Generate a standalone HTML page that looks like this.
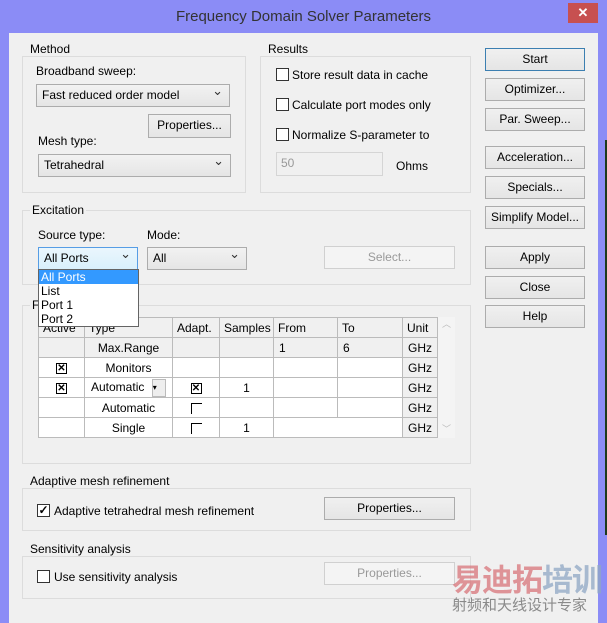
<!DOCTYPE html>
<html><head><meta charset="utf-8"><style>
*{box-sizing:border-box;margin:0;padding:0}
body{width:607px;height:614px;overflow:hidden;background:#8b8cf6;font-family:"Liberation Sans",sans-serif;font-size:12px;color:#000;position:relative}
.a{position:absolute}
#client{left:9px;top:33px;width:589px;height:590px;background:#f0f0f0}
.title{left:0;top:0;width:607px;height:33px;text-align:center;line-height:34px;font-size:15px;color:#333}
.close{left:568px;top:3px;width:30px;height:20px;background:#c75050;color:#fff;text-align:center;line-height:20px;font-size:13px;font-weight:bold}
.grp{border:1px solid #dcdcdc}
.lbl{background:#f0f0f0;padding:0 2px;line-height:14px}
.btn{border:1px solid #acacac;background:linear-gradient(#f0f0f0,#e5e5e5);text-align:center;line-height:20px}
.dis{color:#999;border-color:#d0d0d0;background:#f4f4f4}
.sel{border:1px solid #acacac;background:linear-gradient(#f2f2f2,#e5e5e5);line-height:20px;padding-left:5px}
.sel:after{content:"⌄";position:absolute;right:6px;top:-4px;font-size:13px;color:#333}
.cb{width:13px;height:13px;border:1px solid #333;background:#fff}
table{border-collapse:collapse;position:absolute;left:38px;top:317px;background:#fff}
td{border:1px solid #bbb;height:20px;text-align:center;padding:0;font-size:12px}
tr.h td{background:#f0f0f0;text-align:left;padding-left:4px}
.xb{display:inline-block;width:11px;height:11px;border:1px solid #000;font-size:10px;line-height:9px;font-weight:bold;vertical-align:middle}
.eb{display:inline-block;width:11px;height:11px;border-left:1px solid #000;border-top:1px solid #000;vertical-align:middle}
</style></head><body>
<div class="a title">Frequency Domain Solver Parameters</div>
<div class="a close">✕</div>
<div class="a" id="client"></div>
<div class="a" style="left:605px;top:140px;width:2px;height:395px;background:#1d3a1d"></div>

<!-- Method -->
<div class="a grp" style="left:22px;top:56px;width:224px;height:137px"></div>
<div class="a lbl" style="left:28px;top:42px">Method</div>
<div class="a" style="left:36px;top:64px">Broadband sweep:</div>
<div class="a sel" style="left:36px;top:84px;width:194px;height:23px">Fast reduced order model</div>
<div class="a btn" style="left:148px;top:114px;width:83px;height:24px">Properties...</div>
<div class="a" style="left:38px;top:134px">Mesh type:</div>
<div class="a sel" style="left:38px;top:154px;width:193px;height:23px">Tetrahedral</div>

<!-- Results -->
<div class="a grp" style="left:260px;top:56px;width:211px;height:137px"></div>
<div class="a lbl" style="left:266px;top:42px">Results</div>
<div class="a cb" style="left:276px;top:68px"></div><div class="a" style="left:292px;top:68px">Store result data in cache</div>
<div class="a cb" style="left:276px;top:98px"></div><div class="a" style="left:292px;top:98px">Calculate port modes only</div>
<div class="a cb" style="left:276px;top:128px"></div><div class="a" style="left:292px;top:128px">Normalize S-parameter to</div>
<div class="a" style="left:276px;top:152px;width:107px;height:24px;border:1px solid #d5d5d5;background:#f0f0f0;color:#999;padding:3px 4px">50</div>
<div class="a" style="left:396px;top:159px">Ohms</div>

<!-- Right buttons -->
<div class="a btn" style="left:485px;top:48px;width:100px;height:23px;border-color:#3c7fb1">Start</div>
<div class="a btn" style="left:485px;top:78px;width:100px;height:23px">Optimizer...</div>
<div class="a btn" style="left:485px;top:108px;width:100px;height:23px">Par. Sweep...</div>
<div class="a btn" style="left:485px;top:146px;width:100px;height:23px">Acceleration...</div>
<div class="a btn" style="left:485px;top:176px;width:100px;height:23px">Specials...</div>
<div class="a btn" style="left:485px;top:206px;width:100px;height:23px">Simplify Model...</div>
<div class="a btn" style="left:485px;top:246px;width:100px;height:23px">Apply</div>
<div class="a btn" style="left:485px;top:276px;width:100px;height:23px">Close</div>
<div class="a btn" style="left:485px;top:305px;width:100px;height:23px">Help</div>

<!-- Excitation -->
<div class="a grp" style="left:22px;top:210px;width:449px;height:75px"></div>
<div class="a lbl" style="left:30px;top:203px">Excitation</div>
<div class="a" style="left:38px;top:228px">Source type:</div>
<div class="a" style="left:147px;top:228px">Mode:</div>
<div class="a sel" style="left:147px;top:247px;width:100px;height:23px">All</div>
<div class="a btn dis" style="left:324px;top:246px;width:131px;height:23px">Select...</div>

<!-- Frequency -->
<div class="a grp" style="left:22px;top:305px;width:449px;height:159px"></div>
<div class="a lbl" style="left:30px;top:298px">F</div>
<table>
<tr class="h"><td style="width:46px">Active</td><td style="width:88px">Type</td><td style="width:47px">Adapt.</td><td style="width:54px">Samples</td><td style="width:64px">From</td><td style="width:65px">To</td><td style="width:35px">Unit</td></tr>
<tr><td style="background:#f0f0f0"></td><td style="background:#f0f0f0">Max.Range</td><td style="background:#f0f0f0"></td><td style="background:#f0f0f0"></td><td style="background:#f0f0f0;text-align:left;padding-left:5px">1</td><td style="background:#f0f0f0;text-align:left;padding-left:5px">6</td><td style="background:#f0f0f0">GHz</td></tr>
<tr><td><span class="xb">✕</span></td><td>Monitors</td><td></td><td></td><td></td><td></td><td style="background:#f0f0f0">GHz</td></tr>
<tr><td><span class="xb">✕</span></td><td style="text-align:left;padding-left:6px">Automatic <span style="display:inline-block;width:14px;height:18px;border:1px solid #bbb;background:#eee;font-size:8px;line-height:16px;margin-left:4px;vertical-align:middle">▾</span></td><td><span class="xb">✕</span></td><td>1</td><td></td><td></td><td style="background:#f0f0f0">GHz</td></tr>
<tr><td></td><td>Automatic</td><td><span class="eb"></span></td><td></td><td></td><td></td><td style="background:#f0f0f0">GHz</td></tr>
<tr><td></td><td>Single</td><td><span class="eb"></span></td><td>1</td><td colspan="2"></td><td style="background:#f0f0f0">GHz</td></tr>
</table>
<div class="a" style="left:438px;top:317px;width:17px;height:121px;background:#f4f4f4;color:#bbb;font-size:9px;text-align:center">︿<div style="margin-top:92px">﹀</div></div>

<!-- Source type dropdown -->
<div class="a sel" style="left:38px;top:247px;width:100px;height:23px;border-color:#569de5;background:linear-gradient(#eaf6fd,#d9f0fc)">All Ports</div>
<div class="a" style="left:38px;top:269px;width:101px;height:58px;background:#fff;border:1px solid #646464;line-height:14px">
<div style="background:#3399ff;color:#fff;padding-left:2px">All Ports</div>
<div style="padding-left:2px">List</div><div style="padding-left:2px">Port 1</div><div style="padding-left:2px">Port 2</div></div>

<!-- Adaptive mesh -->
<div class="a grp" style="left:22px;top:488px;width:449px;height:43px"></div>
<div class="a lbl" style="left:28px;top:474px">Adaptive mesh refinement</div>
<div class="a cb" style="left:37px;top:504px;font-size:12px;line-height:10px;text-align:center;font-weight:bold">✓</div>
<div class="a" style="left:54px;top:504px">Adaptive tetrahedral mesh refinement</div>
<div class="a btn" style="left:324px;top:497px;width:131px;height:23px">Properties...</div>

<!-- Sensitivity -->
<div class="a grp" style="left:22px;top:556px;width:449px;height:43px"></div>
<div class="a lbl" style="left:28px;top:542px">Sensitivity analysis</div>
<div class="a cb" style="left:37px;top:570px"></div>
<div class="a" style="left:54px;top:570px">Use sensitivity analysis</div>
<div class="a btn dis" style="left:324px;top:562px;width:131px;height:23px">Properties...</div>

<!-- Watermark -->
<div class="a" style="left:452px;top:560px;font-family:'Noto Sans CJK SC',sans-serif;font-size:31px;font-weight:bold;line-height:36px;letter-spacing:-1px;opacity:.75"><span style="color:#d9747a">易迪拓</span><span style="color:#8fa7c4">培训</span></div>
<div class="a" style="left:452px;top:596px;font-family:'Noto Sans CJK SC',sans-serif;font-size:15px;line-height:18px;color:#8a8a8a">射频和天线设计专家</div>
</body></html>
